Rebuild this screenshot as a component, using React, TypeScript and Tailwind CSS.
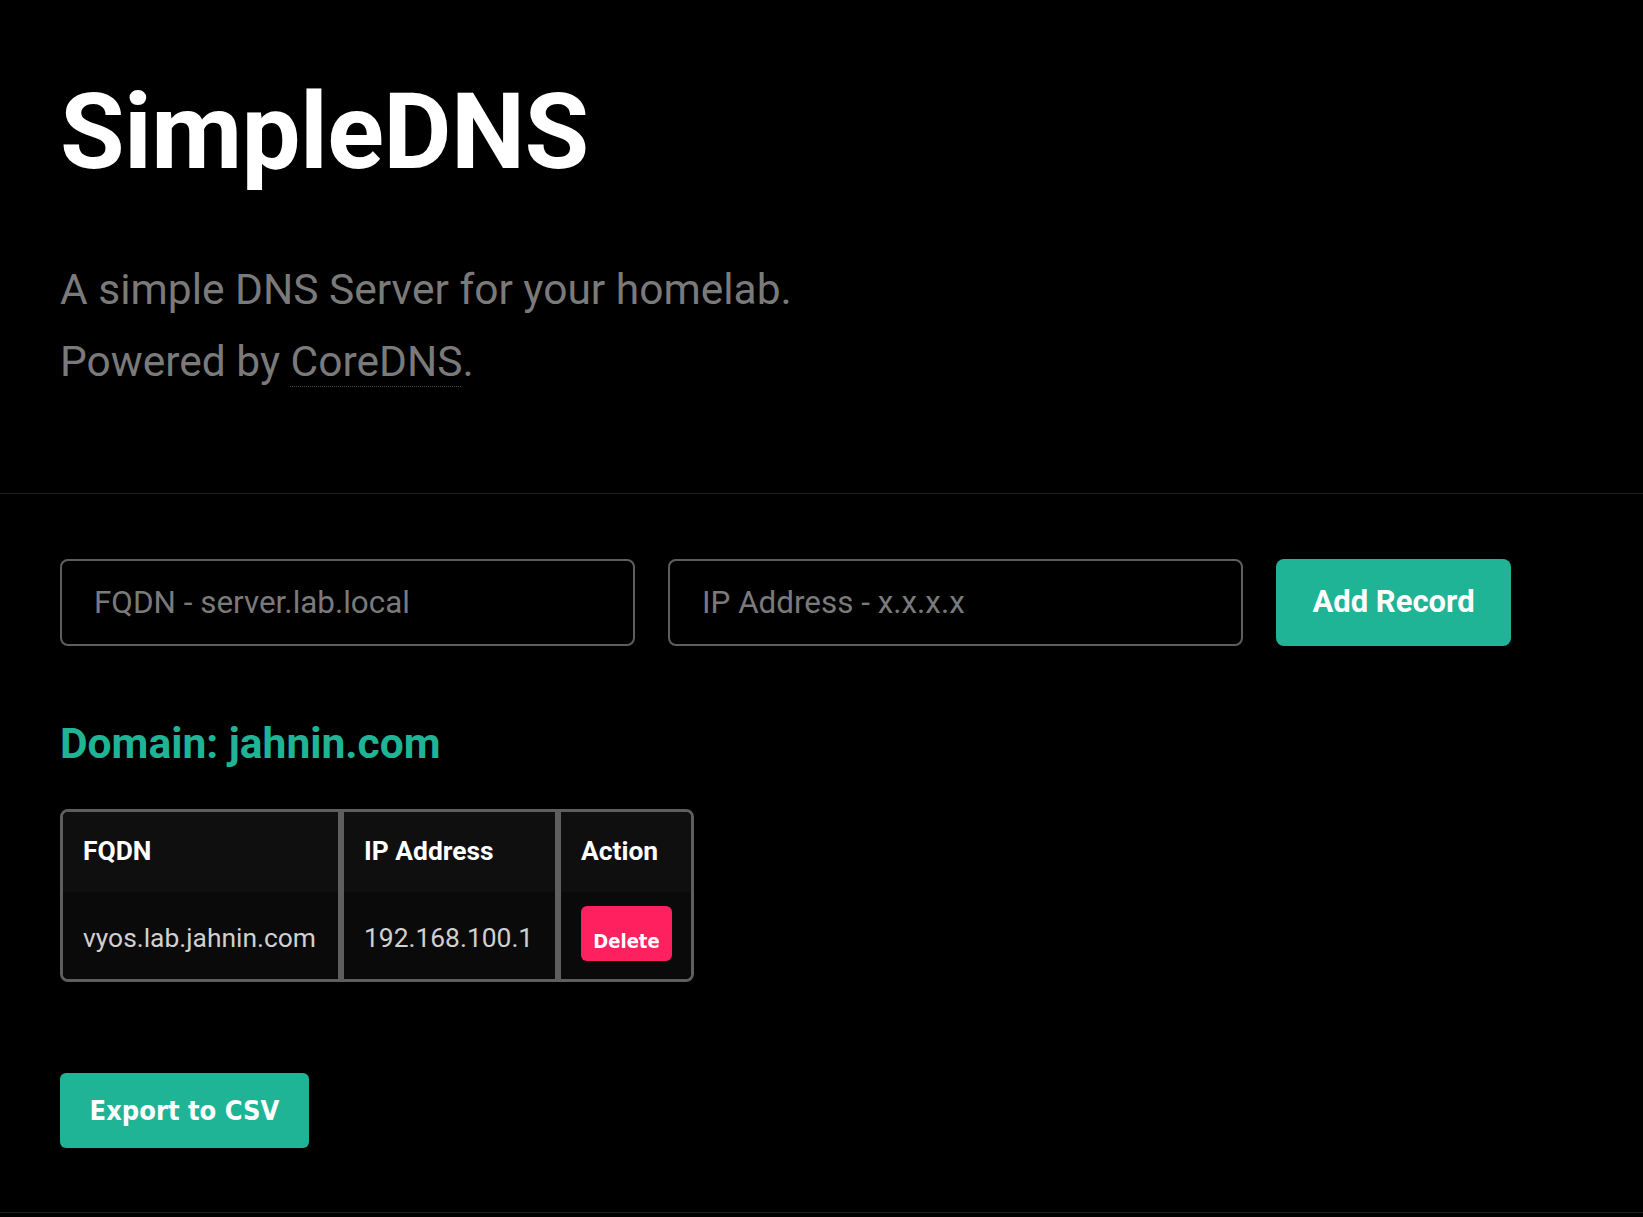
const roboto = { fontFamily: 'Roboto, "Liberation Sans", sans-serif' };

type DnsRecord = { fqdn: string; ip: string };

const records: DnsRecord[] = [{ fqdn: 'vyos.lab.jahnin.com', ip: '192.168.100.1' }];

const App = () => {
  return (
    <div className="min-h-screen bg-black text-white font-['Roboto','Liberation_Sans',sans-serif]" style={roboto}>
      {/* header */}
      <header className="border-b border-[#1f1f1f] pl-[60px] pt-[80px] pb-[95px]">
        <h1 className="text-[105px] font-bold leading-none tracking-[-0.6px]">SimpleDNS</h1>
        <p className="mt-[69px] text-[42.5px] leading-[72px] text-[#7a7a7a]">
          A simple DNS Server for your homelab.
          <br />
          Powered by{' '}
          <a
            href="#"
            className="underline decoration-dotted decoration-[#4a4a4a] decoration-1 underline-offset-[10px]"
          >
            CoreDNS
          </a>
          .
        </p>
      </header>

      <main className="pl-[60px] pt-[65px] pb-[64px] border-b border-[#1f1f1f]">
        {/* add record form */}
        <form className="flex gap-[33px]" onSubmit={(e) => e.preventDefault()}>
          <input
            type="text"
            placeholder="FQDN - server.lab.local"
            className="h-[87px] w-[575px] rounded-lg border-2 border-[#5e5e5e] bg-black pl-[32px] text-[31.4px] text-white placeholder:text-[#7a7a7a] outline-none"
          />
          <input
            type="text"
            placeholder="IP Address - x.x.x.x"
            className="h-[87px] w-[575px] rounded-lg border-2 border-[#5e5e5e] bg-black pl-[32px] text-[31.4px] text-white placeholder:text-[#7a7a7a] outline-none"
          />
          <button
            type="submit"
            className="h-[87px] w-[235px] rounded-lg bg-[#1fb495] text-[31px] font-bold text-white"
          >
            Add Record
          </button>
        </form>

        <h2 className="mt-[77px] text-[42.5px] font-bold leading-none text-[#1fb495]">Domain: jahnin.com</h2>

        {/* records table */}
        <div className="mt-[43px] inline-grid grid-cols-[278px_217px_133px] overflow-hidden rounded-lg border-[3px] border-[#5e5e5e] text-[26.4px]">
          <div className="flex h-[80px] items-center border-r-[3px] border-[#5e5e5e] bg-[#0f0f0f] px-5 font-bold">FQDN</div>
          <div className="flex h-[80px] items-center border-x-[3px] border-[#5e5e5e] bg-[#0f0f0f] px-5 font-bold">IP Address</div>
          <div className="flex h-[80px] items-center border-l-[3px] border-[#5e5e5e] bg-[#0f0f0f] px-5 font-bold">Action</div>
          {records.map((r) => (
            <>
              <div key={r.fqdn + '-f'} className="h-[87px] border-r-[3px] border-[#5e5e5e] bg-[#0a0a0a] px-5 pt-[27px] leading-[39px] text-[#d0d0d0]">
                {r.fqdn}
              </div>
              <div key={r.fqdn + '-i'} className="h-[87px] border-x-[3px] border-[#5e5e5e] bg-[#0a0a0a] px-5 pt-[27px] leading-[39px] text-[#d0d0d0]">
                {r.ip}
              </div>
              <div key={r.fqdn + '-a'} className="h-[87px] border-l-[3px] border-[#5e5e5e] bg-[#0a0a0a] pl-5 pt-[14px]">
                <button
                  type="button"
                  className="block h-[55px] w-[91px] rounded-md bg-[#ff2060] pt-[16px] text-center font-['DejaVu_Sans_Condensed','DejaVu_Sans',sans-serif] text-[20px] font-bold leading-none text-white"
                >
                  Delete
                </button>
              </div>
            </>
          ))}
        </div>

        <div className="mt-[91px]">
          <button
            type="button"
            className="flex h-[75px] w-[249px] items-center justify-center rounded-md bg-[#1fb495] font-['DejaVu_Sans_Condensed','DejaVu_Sans',sans-serif] text-[27px] font-bold leading-none text-white"
          >
            Export to CSV
          </button>
        </div>
      </main>
    </div>
  );
};

export default App;
